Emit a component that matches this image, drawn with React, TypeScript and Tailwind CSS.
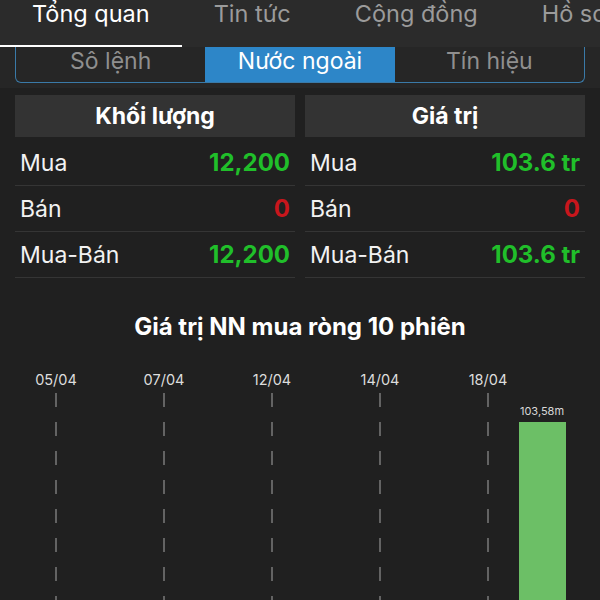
import React from 'react';

const topTabs = ['Tổng quan', 'Tin tức', 'Cộng đồng', 'Hồ sơ'];
const segments = ['Sô lệnh', 'Nước ngoài', 'Tín hiệu'];

type Row = { label: string; value: string; up: boolean };

const volumeRows: Row[] = [
  { label: 'Mua', value: '12,200', up: true },
  { label: 'Bán', value: '0', up: false },
  { label: 'Mua-Bán', value: '12,200', up: true },
];

const valueRows: Row[] = [
  { label: 'Mua', value: '103.6 tr', up: true },
  { label: 'Bán', value: '0', up: false },
  { label: 'Mua-Bán', value: '103.6 tr', up: true },
];

// 10 phiên, chỉ hiện nhãn ngày ở các phiên chẵn
const sessions = [
  { date: '05/04', value: 0 },
  { date: '', value: 0 },
  { date: '07/04', value: 0 },
  { date: '', value: 0 },
  { date: '12/04', value: 0 },
  { date: '', value: 0 },
  { date: '14/04', value: 0 },
  { date: '', value: 0 },
  { date: '18/04', value: 0 },
  { date: '', value: 103.58 },
];

const StatTable: React.FC<{ title: string; rows: Row[] }> = ({ title, rows }) => (
  <div className="flex-1">
    <div className="h-[42px] bg-[#333333] flex items-center justify-center">
      <span className="text-white font-bold text-[23px] leading-[30px]">{title}</span>
    </div>
    <div className="pt-[3px]">
      {rows.map((r) => (
        <div key={r.label} className="h-[46px] border-b border-[#353535] flex items-center justify-between px-[5px]">
          <span className="text-[#f2f2f2] text-[23px] leading-[30px]">{r.label}</span>
          <span className={`font-bold text-[24px] leading-[30px] ${r.up ? 'text-[#20bf2a]' : 'text-[#c8161c]'}`}>{r.value}</span>
        </div>
      ))}
    </div>
  </div>
);

const DashedLine: React.FC = () => (
  <svg width="4" height="220" className="block">
    <line x1="2" y1="0" x2="2" y2="220" stroke="#7a7a7a" strokeWidth="1.5" strokeDasharray="14 15" />
  </svg>
);

const App: React.FC = () => {
  const max = 103.58;
  const barMax = 191;

  return (
    <div className="w-[600px] h-[600px] overflow-hidden bg-[#202020] font-['Inter',sans-serif]">
      <div className="h-[47px] bg-[#2b2b2b] flex whitespace-nowrap">
        {topTabs.map((t, i) => (
          <div key={t} className="flex flex-col justify-between px-8">
            <span className={`text-[23.5px] leading-[28px] ${i === 0 ? 'text-white' : 'text-[#9b9b9b]'}`}>{t}</span>
            <div className={`h-[2px] -mx-8 ${i === 0 ? 'bg-white' : 'bg-transparent'}`} />
          </div>
        ))}
      </div>

      <div className="bg-[#262626] px-[15px] pb-[5px]">
        <div className="h-[36px] grid grid-cols-3 border border-t-0 border-[#3a7aa8] rounded-b-md overflow-hidden">
          {segments.map((s, i) => (
            <div
              key={s}
              className={`flex items-center justify-center pb-[7px] text-[23px] leading-[28px] ${i === 1 ? 'bg-[#2d86c8] text-white' : 'text-[#8f8f8f]'}`}
            >
              {s}
            </div>
          ))}
        </div>
      </div>

      <div className="flex gap-[10px] px-[15px] mt-[7px]">
        <StatTable title="Khối lượng" rows={volumeRows} />
        <StatTable title="Giá trị" rows={valueRows} />
      </div>

      <h2 className="text-center text-white font-bold text-[24px] leading-[32px] mt-[33px]">Giá trị NN mua ròng 10 phiên</h2>

      <div className="grid grid-cols-[repeat(10,54px)] pl-[29px] mt-[29px] h-[240px]">
        {sessions.map((s, i) => (
          <div key={i} className="flex flex-col items-center">
            <span className="text-[14.5px] leading-[16px] text-[#dddddd] h-[16px]">{s.date}</span>
            {s.date && (
              <div className="mt-[5px]">
                <DashedLine />
              </div>
            )}
            {s.value > 0 && (
              <div className="flex flex-col items-center flex-1 justify-end">
                <span className="text-[11px] leading-[14px] text-[#d8d8d8] mb-[4px]">{s.value.toFixed(2).replace('.', ',')}m</span>
                <div className="w-[47px] bg-[#6cbf66]" style={{ height: (s.value / max) * barMax }} />
              </div>
            )}
          </div>
        ))}
      </div>
    </div>
  );
};

export default App;
